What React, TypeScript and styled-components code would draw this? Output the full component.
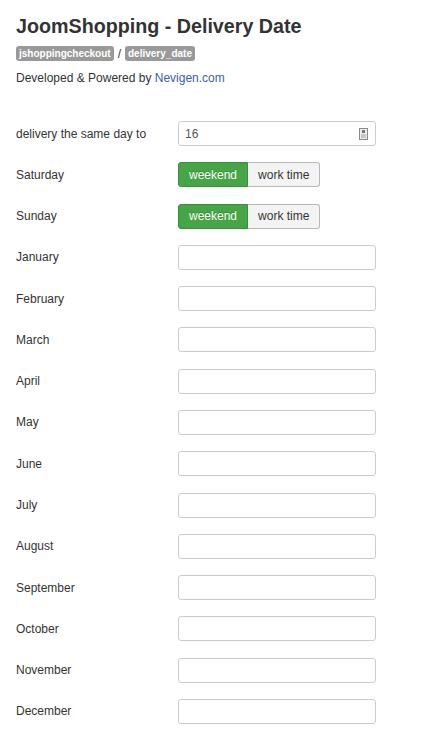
import React from "react";
import styled, { createGlobalStyle } from "styled-components";

const Global = createGlobalStyle`
  html, body { margin: 0; padding: 0; background: #fff; }
  body { font-family: "Liberation Sans", Arial, sans-serif; color: #333; }
`;

const Page = styled.div`
  padding: 14px 16px 20px 16px;
`;

const Title = styled.h1`
  margin: 0;
  font-size: 19.7px;
  line-height: 24px;
  font-weight: bold;
  color: #333;
`;

const BadgeRow = styled.div`
  display: flex;
  align-items: center;
  gap: 4px;
  margin-top: 8px;
  font-size: 12px;
  color: #333;
`;

const Badge = styled.span`
  display: inline-block;
  background: #999;
  color: #fff;
  font-size: 10px;
  font-weight: bold;
  line-height: 11px;
  padding: 2px 3px;
  border-radius: 3px;
`;

const Credit = styled.p`
  margin: 8px 0 0 0;
  font-size: 12px;
  line-height: 18px;
  color: #333;
`;

const Link = styled.a`
  color: #3a5fae;
  text-decoration: none;
`;

const Form = styled.div`
  display: grid;
  grid-template-columns: 162px 198px;
  grid-auto-rows: 25px;
  row-gap: 16.29px;
  align-items: center;
  margin-top: 34px;
`;

const Label = styled.label`
  font-size: 12px;
  line-height: 18px;
  color: #333;
`;

const Field = styled.div`
  position: relative;
  box-sizing: border-box;
  height: 25px;
  width: 198px;
  border: 1px solid #ccc;
  border-radius: 3px;
  background: #fff;
  display: flex;
  align-items: center;
  padding: 0 6px;
  font-size: 12px;
  color: #555;
`;

const Spin = styled.svg`
  position: absolute;
  right: 7px;
  top: 6px;
`;

const Toggle = styled.div`
  display: inline-flex;
  height: 25px;
`;

const ToggleBtn = styled.span<{ $active?: boolean; $first?: boolean }>`
  box-sizing: border-box;
  display: flex;
  align-items: center;
  height: 25px;
  padding: 0 10px;
  font-size: 12px;
  border: 1px solid ${(p) => (p.$active ? "#3b8c3b" : "#b9b9b9")};
  background: ${(p) => (p.$active ? "#46a546" : "#f3f3f3")};
  color: ${(p) => (p.$active ? "#fff" : "#333")};
  text-shadow: ${(p) => (p.$active ? "0 -1px 0 rgba(0,0,0,0.2)" : "none")};
  border-radius: ${(p) => (p.$first ? "3px 0 0 3px" : "0 3px 3px 0")};
  ${(p) => (p.$first ? "" : "border-left: none;")}
`;

const months = [
  "January",
  "February",
  "March",
  "April",
  "May",
  "June",
  "July",
  "August",
  "September",
  "October",
  "November",
  "December",
];

const DayToggle = () => (
  <Toggle>
    <ToggleBtn $active $first>
      weekend
    </ToggleBtn>
    <ToggleBtn>work time</ToggleBtn>
  </Toggle>
);

export default function App() {
  return (
    <Page>
      <Global />
      <Title>JoomShopping - Delivery Date</Title>
      <BadgeRow>
        <Badge>jshoppingcheckout</Badge>
        <span>/</span>
        <Badge>delivery_date</Badge>
      </BadgeRow>
      <Credit>
        Developed &amp; Powered by <Link href="#">Nevigen.com</Link>
      </Credit>
      <Form>
        <Label>delivery the same day to</Label>
        <Field>
          16
          <Spin width="9" height="12" viewBox="0 0 9 12">
            <rect x="0.5" y="0.5" width="8" height="11" fill="#eee" stroke="#8a8a8a" />
            <rect x="3" y="2" width="3" height="3" fill="#777" />
            <rect x="2" y="6" width="5" height="4" fill="#c8c8c8" />
          </Spin>
        </Field>
        <Label>Saturday</Label>
        <div>
          <DayToggle />
        </div>
        <Label>Sunday</Label>
        <div>
          <DayToggle />
        </div>
        {months.map((m) => (
          <React.Fragment key={m}>
            <Label>{m}</Label>
            <Field />
          </React.Fragment>
        ))}
      </Form>
    </Page>
  );
}
